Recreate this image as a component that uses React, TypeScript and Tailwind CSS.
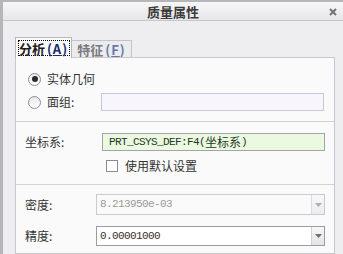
import React from "react";

const CJK = '"Noto Sans CJK SC", "Noto Sans", sans-serif';
const MONO = '"Liberation Mono", monospace';
const monoStyle = { fontFamily: MONO, fontSize: "11px", letterSpacing: "-0.6px" };

function Radio({ checked }: { checked?: boolean }) {
  return (
    <div className="w-[13px] h-[13px] rounded-full border border-[#8e8e92] bg-gradient-to-b from-[#e8e8ea] to-white flex items-center justify-center shrink-0">
      {checked && <div className="w-[6px] h-[6px] rounded-full bg-[#2a2a2a]" />}
    </div>
  );
}

function Arrow({ color }: { color: string }) {
  return (
    <svg width="7" height="4" viewBox="0 0 7 4">
      <path d="M0 0 L7 0 L3.5 4 Z" fill={color} />
    </svg>
  );
}

export default function App() {
  return (
    <div
      className="w-[343px] h-[254px] overflow-hidden bg-[#eeeef0] border-l-[3px] border-t-2 border-[#b6b6ba] flex flex-col text-[12px] text-[#333]"
      style={{ fontFamily: CJK }}
    >
      {/* Title bar */}
      <div className="relative h-[19px] shrink-0 bg-gradient-to-b from-[#f6f6f7] to-[#e7e7e9] border-b border-[#c6c6ca] flex items-center justify-center">
        <span className="text-[13px] font-bold text-[#3c3c3c] leading-none">质量属性</span>
        <svg className="absolute right-[6px] top-[6px]" width="8" height="8" viewBox="0 0 8 8">
          <path d="M1 1 L7 7 M7 1 L1 7" stroke="#747478" strokeWidth="2" />
        </svg>
      </div>

      {/* Tabs */}
      <div className="pt-[16px] pl-[12px] flex items-end h-[36px] shrink-0">
        <div className="relative z-10 h-[21px] w-[57px] -mb-px border border-b-0 border-[#b8b8bc] bg-[#fafafa] flex items-center justify-center">
          <div className="border border-dotted border-[#000] h-[16px] w-[52px] flex items-center justify-center font-bold text-[13px] text-[#202020] leading-none">
            分析<span className="ml-[2px] text-[#1c2c6c] tracking-[1px]">(<span className="underline">A</span>)</span>
          </div>
        </div>
        <div className="h-[17px] w-[60px] border border-l-0 border-b-0 border-[#c4c4c8] bg-[#ececee] flex items-center justify-center font-bold text-[13px] text-[#7a7a7e] leading-none">
          特征<span className="ml-[2px] text-[#6a7aa8] tracking-[1px]">(<span className="underline">F</span>)</span>
        </div>
      </div>

      {/* Panel */}
      <div className="ml-[12px] w-[320px] flex-1 border border-[#c8c8cc] bg-[#fafafa] flex flex-col">
        {/* Section 1 */}
        <div className="pt-[12px] pb-[10px] flex flex-col gap-[5px] border-b border-[#d2d2d6]">
          <div className="h-[18px] flex items-center pl-[12px]">
            <Radio checked />
            <span className="ml-[6px]">实体几何</span>
          </div>
          <div className="h-[18px] flex items-center pl-[12px]">
            <Radio />
            <span className="ml-[6px] w-[54px]">面组:</span>
            <div className="w-[223px] h-[18px] border border-[#c8c8d0] bg-[#f8f6fc]" />
          </div>
        </div>

        {/* Section 2 */}
        <div className="pt-[11px] pb-[12px] border-b border-[#d2d2d6] flex flex-col">
          <div className="h-[18px] flex items-center pl-[9px]">
            <span className="w-[77px]">坐标系:</span>
            <div className="w-[223px] h-[18px] border border-[#a4a4a8] bg-[#ebf9e1] flex items-center pl-[6px] text-[#263626]">
              <span style={monoStyle}>PRT_CSYS_DEF:F4(</span>
              <span className="text-[12px]">坐标系</span>
              <span style={monoStyle}>)</span>
            </div>
          </div>
          <div className="mt-[9px] h-[12px] flex items-center pl-[90px]">
            <div className="w-[12px] h-[12px] border border-[#8c8c90] bg-white shrink-0" />
            <span className="ml-[7px]">使用默认设置</span>
          </div>
        </div>

        {/* Section 3 */}
        <div className="pt-[9px] flex flex-col gap-[11px]">
          <div className="h-[21px] flex items-center pl-[9px]">
            <span className="w-[71px]">密度:</span>
            <div className="w-[229px] h-[21px] border border-[#cacace] bg-[#fafafa] flex items-center">
              <span className="flex-1 pl-[3px] text-[#9a9a9a]" style={monoStyle}>
                8.213950e-03
              </span>
              <div className="w-[13px] h-full border-l border-[#dcdce0] bg-gradient-to-b from-[#f8f8f8] to-[#ececee] flex items-center justify-center">
                <Arrow color="#b0b0b4" />
              </div>
            </div>
          </div>
          <div className="h-[20px] flex items-center pl-[9px]">
            <span className="w-[71px]">精度:</span>
            <div className="w-[229px] h-[20px] border border-[#9c9ca0] bg-white flex items-center">
              <span className="flex-1 pl-[3px] text-[#3a3028]" style={monoStyle}>
                0.00001000
              </span>
              <div className="w-[13px] h-full border-l border-[#d0d0d4] bg-gradient-to-b from-[#f6f6f6] to-[#e4e4e6] flex items-center justify-center">
                <Arrow color="#6e6e72" />
              </div>
            </div>
          </div>
        </div>
      </div>
    </div>
  );
}
